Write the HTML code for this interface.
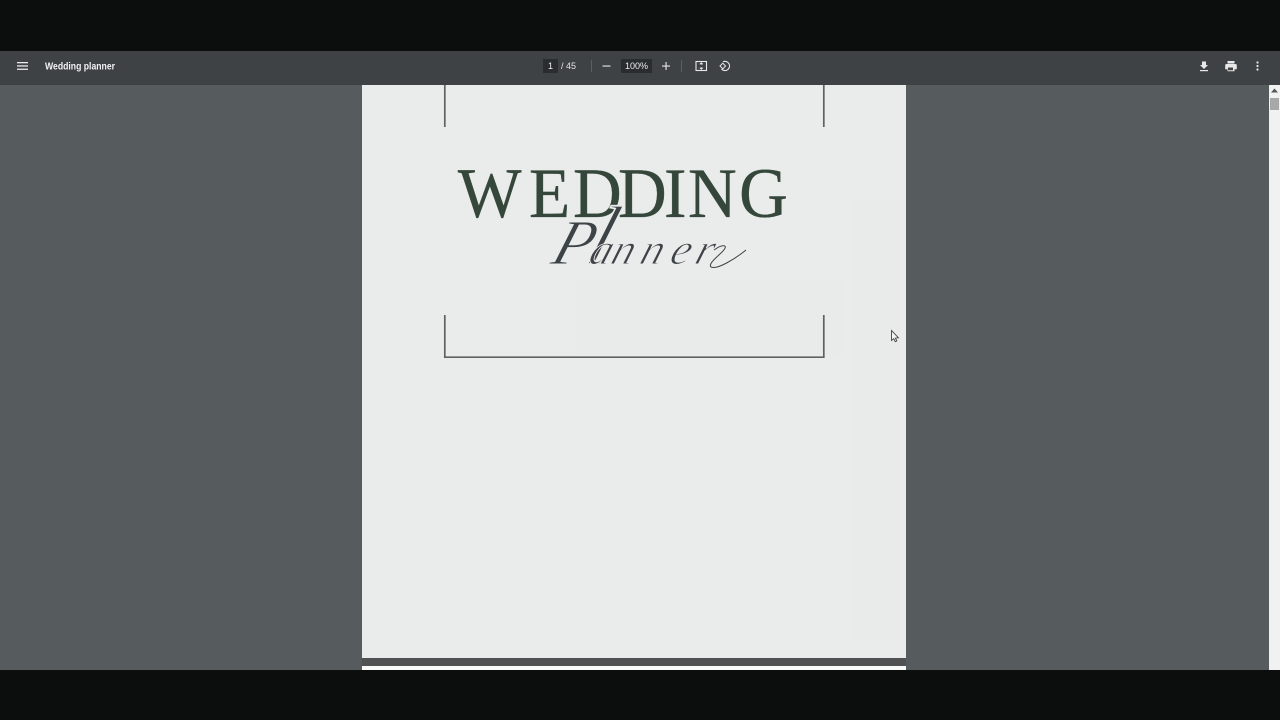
<!DOCTYPE html>
<html>
<head>
<meta charset="utf-8">
<style>
html,body{margin:0;padding:0;width:1280px;height:720px;overflow:hidden;background:#0c0d0d;}
body{position:relative;font-family:"Liberation Sans",sans-serif;}
.a{position:absolute;}
svg{position:absolute;left:0;top:0;}
.t{filter:blur(.3px);}
</style>
</head>
<body>
<div class="a" style="left:0;top:0;width:1280px;height:51px;background:#0c0d0d"></div>
<div class="a" style="left:0;top:85px;width:1280px;height:585px;background:#565b5e"></div>
<div class="a" style="left:0;top:51px;width:1280px;height:34px;background:#3e4245"></div>
<div class="a" style="left:362px;top:85px;width:544px;height:573px;background:#eaebeb"></div>
<div class="a" style="left:850px;top:200px;width:50px;height:440px;background:#e9eaea"></div>
<div class="a" style="left:575px;top:280px;width:270px;height:75px;background:#e9eaea"></div>
<div class="a" style="left:362px;top:658px;width:544px;height:8px;background:#4f5152"></div>
<div class="a" style="left:362px;top:666px;width:544px;height:4px;background:#fafafa"></div>
<div class="a" style="left:0;top:670px;width:1280px;height:50px;background:#0c0d0d"></div>
<div class="a" style="left:1269px;top:85px;width:11px;height:585px;background:#f1f1f1"></div>
<div class="a" style="left:1270px;top:98px;width:9px;height:12px;background:#a8a8a8"></div>

<div class="a t" style="left:543px;top:59px;width:15px;height:14px;background:#2a2d30;color:#eee;font-size:9px;line-height:15px;text-align:center">1</div>
<div class="a t" style="left:561px;top:60px;font-size:9px;line-height:13px;color:#e4e4e4;white-space:nowrap">/ 45</div>
<div class="a t" style="left:621px;top:59px;width:31px;height:14px;background:#2a2d30;color:#eee;font-size:9px;line-height:15px;text-align:center">100%</div>

<svg width="1280" height="720" viewBox="0 0 1280 720">
  <text class="t" x="45" y="69.500" font-family="'Liberation Sans',sans-serif" font-weight="bold" font-size="10" fill="#f1f1f1" textLength="70" lengthAdjust="spacingAndGlyphs">Wedding planner</text>
  <!-- toolbar icons -->
  <g fill="#e8e8e8" class="t">
    <rect x="17" y="62" width="11" height="1.3"/><rect x="17" y="65.300" width="11" height="1.3"/><rect x="17" y="68.600" width="11" height="1.3"/>
    <rect x="602.500" y="65.500" width="8" height="1.100"/>
    <rect x="662" y="65.500" width="8" height="1.100"/><rect x="665.500" y="62" width="1.100" height="8"/>
    <path d="M1202 61.500h4v3.500h2l-4 4-4-4h2z"/><rect x="1200" y="70" width="8" height="1.200"/>
    <path d="M1227.500 61h7v2.500h-7zM1226.500 64h9a1.300 1.300 0 0 1 1.300 1.300v4h-2.300v2h-7v-2h-2.300v-4a1.300 1.300 0 0 1 1.300-1.300zM1228 67.500v2.800h5v-2.800z" fill-rule="evenodd"/>
    <circle cx="1257.500" cy="62.500" r="1.100"/><circle cx="1257.500" cy="66" r="1.100"/><circle cx="1257.500" cy="69.500" r="1.100"/>
    <path d="M1274.500 88.500l3.500 4h-7z" fill="#555"/>
  </g>
  <rect x="591" y="60" width="1" height="12" fill="#5a5f63"/>
  <rect x="681" y="60" width="1" height="12" fill="#5a5f63"/>
  <g fill="none" stroke="#e8e8e8" class="t">
    <rect x="696" y="61.500" width="10.500" height="9" stroke-width="1.100"/>
    <path d="M701.300 62.800v2M699.800 64.300l1.500-1.500 1.500 1.500M701.300 69.200v-2M699.800 67.700l1.500 1.500 1.500-1.500" stroke-width="0.900"/>
    <path d="M723 61.800a4.600 4.600 0 1 1-1.500 7.200" stroke-width="1.100"/>
    <path d="M720 66l2.800-2.800 2.800 2.800-2.800 2.800z" stroke-width="1"/>
  </g>

  <!-- frame -->
  <path d="M444.800 85v42M823.800 85v42" stroke="#5f6263" stroke-width="1.700" fill="none"/>
  <path d="M444.800 315v42.200h379V315" stroke="#5f6263" stroke-width="1.700" fill="none"/>

  <!-- title -->
  <text transform="translate(0 217) scale(.95 1)" y="0" x="482 556.800 603.200 650.500 699 724.200 778" font-family="'Liberation Serif',serif" font-size="71" fill="#35473b" stroke="#35473b" stroke-width="0.350">WEDDING</text>
  <text transform="translate(549 264) skewX(-18)" font-family="'Liberation Serif',serif" font-style="italic" fill="#3d4347" stroke="#eaebeb" stroke-width="0.900" font-size="44"><tspan x="0" font-size="64">P</tspan><tspan x="34" font-size="84" stroke-width="1.700">l</tspan><tspan x="38">a</tspan><tspan x="60">n</tspan><tspan x="89">n</tspan><tspan x="119">e</tspan><tspan x="144">r</tspan></text>
  <!-- decorative tail flourish -->
  <path d="M714 250c8-6 16-6 8 2-6 6-14 12-11 15 6 3 24-8 35-17" fill="none" stroke="#3d4347" stroke-width="1"/>

  <!-- cursor -->
  <path d="M891.500 330.500v10l2.300-1.800 1.400 3 1.600-.8-1.400-2.800 3-.3z" fill="#f4f4f4" stroke="#444" stroke-width="0.900"/>
</svg>
</body>
</html>
